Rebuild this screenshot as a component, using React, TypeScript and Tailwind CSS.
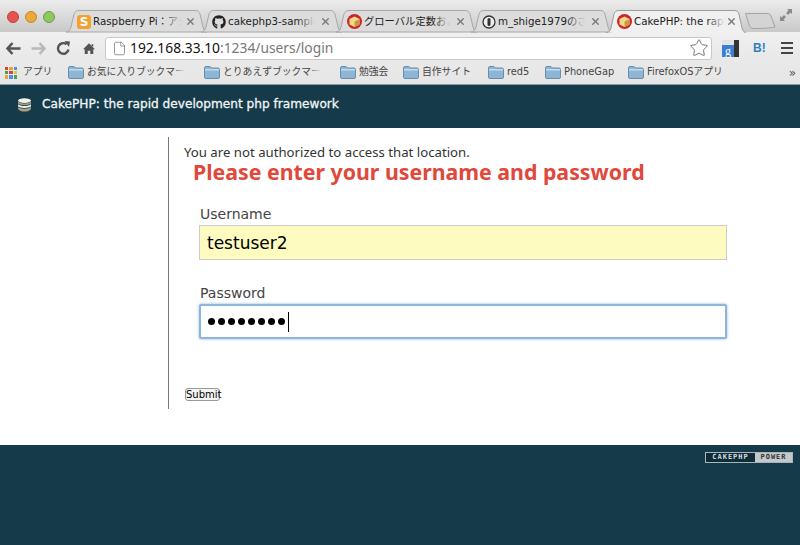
import React from 'react';
import { FaGithub } from 'react-icons/fa';
import { File, Star, X } from 'lucide-react';

const sans = { fontFamily: '"DejaVu Sans", "Noto Sans CJK JP", sans-serif' };
const noto = { fontFamily: '"Noto Sans", "Noto Sans CJK JP", sans-serif' };

const CakeFavicon = () => (
    <svg width="15" height="15" viewBox="0 0 15 15" className="shrink-0">
        <circle cx="7.5" cy="7.5" r="7.5" fill="#c9272c" />
        <path d="M7.5 2.5 L12.5 5 V10.5 L7.5 13 L2.5 10.5 V5 Z" fill="#f5d98a" />
        <path d="M7.5 7.5 L12.5 5 V10.5 L7.5 13 Z" fill="#c99a3f" />
    </svg>
);

const Tab = ({ icon, label, active, fadeAt }: { icon: React.ReactNode; label: string; active?: boolean; fadeAt: number }) => (
    <div className={`relative h-[22px] shrink-0 ${active ? 'w-[140px] z-10' : 'w-[135px]'}`}>
        <svg className="absolute left-0 top-0" width={active ? 140 : 141} height="23" viewBox={`0 0 ${active ? 140 : 141} 23`}>
            {active ? (
                <path d="M0 22.5 C3 22.5 4 21 5 18 L8 4 C9 1.5 10 0.5 13 0.5 H128 C131 0.5 132 1.5 133 4 L136 18 C137 21 138 22.5 140 22.5" fill="#f0f0f0" stroke="#9c9c9c" />
            ) : (
                <path d="M0 22 C3 22 4 20 5 17 L8 4 C9 1.5 10 0.5 13 0.5 H129 C132 0.5 133 1.5 134 4 L137 17 C138 20 139 22 141 22 Z" fill="#dcdcdc" stroke="#a8a8a8" />
            )}
        </svg>
        <div className="relative flex h-full items-center pl-[11px] pt-[1px]">
            {icon}
            <div className="relative ml-[2px] overflow-hidden whitespace-nowrap text-[10.3px] text-[#222]" style={{ ...sans, width: fadeAt }}>
                {label}
                <div className={`absolute right-0 top-0 h-full w-[18px] bg-gradient-to-r from-transparent ${active ? 'to-[#f0f0f0]' : 'to-[#dcdcdc]'}`} />
            </div>
            <X size={11} strokeWidth={3} className={`absolute top-[6px] text-[#777] ${active ? 'right-[9px]' : 'right-[5px]'}`} />
        </div>
    </div>
);

const Folder = () => (
    <svg width="16" height="13" viewBox="0 0 16 13" className="shrink-0">
        <path d="M0.5 2 Q0.5 0.5 2 0.5 H6 L7.5 2 H14 Q15.5 2 15.5 3.5 V11 Q15.5 12.5 14 12.5 H2 Q0.5 12.5 0.5 11 Z" fill="#8db6d6" stroke="#6d8ba5" />
        <rect x="1" y="3" width="14" height="1.5" fill="#c4dcee" />
    </svg>
);

const Bookmark = ({ label, width, fade }: { label: string; width: number; fade?: boolean }) => (
    <div className="flex shrink-0 items-center" style={{ width }}>
        <Folder />
        <div className="relative ml-[3px] overflow-hidden whitespace-nowrap text-[9.8px] text-[#444]">
            {label}
            {fade && <div className="absolute right-0 top-0 h-full w-[12px] bg-gradient-to-r from-transparent to-[#e8e8e8]" />}
        </div>
    </div>
);

const AppsGrid = () => {
    const colors = ['#d9433b', '#e8a33a', '#4d8fe0', '#46a35a', '#d9433b', '#e8c33a', '#e8a33a', '#4d8fe0', '#46a35a'];
    return (
        <div className="grid h-[12px] w-[12px] shrink-0 grid-cols-3 gap-[1px]">
            {colors.map((c, i) => (
                <div key={i} style={{ backgroundColor: c }} />
            ))}
        </div>
    );
};

const CakeLogo = () => (
    <svg width="15" height="14" viewBox="0 0 15 14" className="shrink-0">
        <ellipse cx="7.5" cy="2.6" rx="6.5" ry="2.4" fill="#f2f2e6" />
        <path d="M1 3.5 C3 6 12 6 14 3.5 V5.5 C12 7.8 3 7.8 1 5.5 Z" fill="#a99f82" />
        <path d="M1 6.2 C3 8.6 12 8.6 14 6.2 V8.2 C12 10.5 3 10.5 1 8.2 Z" fill="#f2f2e6" />
        <path d="M1 8.9 C3 11.2 12 11.2 14 8.9 V11 C12 14.4 3 14.4 1 11 Z" fill="#a99f82" />
    </svg>
);

export default function App() {
    return (
        <div className="flex h-[545px] w-[800px] flex-col overflow-hidden bg-white" style={sans}>
            {/* tab strip */}
            <div className="relative flex h-[32px] shrink-0 items-end bg-gradient-to-b from-[#ececec] to-[#c9c9c9] pl-[66px]">
                <div className="absolute left-[7px] top-[11px] flex gap-[6px]">
                    <div className="h-[12px] w-[12px] rounded-full border border-[#b8453f] bg-[#e5534c]" />
                    <div className="h-[12px] w-[12px] rounded-full border border-[#c48a2c] bg-[#eba93c]" />
                    <div className="h-[12px] w-[12px] rounded-full border border-[#6d9d43] bg-[#8fc860]" />
                </div>
                <Tab
                    fadeAt={89}
                    label="Raspberry Pi：アシ"
                    icon={<div className="flex h-[14px] w-[14px] shrink-0 items-center justify-center rounded-[3px] bg-[#f3a02f] text-[12px] font-bold leading-none text-white">S</div>}
                />
                <Tab fadeAt={87} label="cakephp3-sample" icon={<FaGithub size={14} className="shrink-0 text-[#222]" />} />
                <Tab fadeAt={87} label="グローバル定数およ" icon={<CakeFavicon />} />
                <Tab
                    fadeAt={87}
                    label="m_shige1979のさ"
                    icon={
                        <svg width="14" height="14" viewBox="0 0 14 14" className="shrink-0">
                            <circle cx="7" cy="7" r="6" fill="#eee" stroke="#333" strokeWidth="1.3" />
                            <rect x="5.5" y="3" width="3" height="8" rx="1.5" fill="#333" />
                        </svg>
                    }
                />
                <Tab active fadeAt={91} label="CakePHP: the rapid" icon={<CakeFavicon />} />
                <svg width="32" height="17" viewBox="0 0 32 17" className="ml-[-1px] mb-[3px] shrink-0">
                    <path d="M0.5 1.5 H23 Q25 1.5 26 4 L30 15 Q24 16.5 8 16.5 Q5.5 16.5 4.5 14 Z" fill="#d4d4d4" stroke="#a4a4a4" />
                </svg>
                <svg width="14" height="14" viewBox="0 0 14 14" className="absolute right-[7px] top-[8px]">
                    <path d="M8 1 H13 V6 L11.5 4.5 L9 7 L7 5 L9.5 2.5 Z M6 13 H1 V8 L2.5 9.5 L5 7 L7 9 L4.5 11.5 Z" fill="#8a8a8a" />
                </svg>
            </div>

            {/* toolbar */}
            <div className="flex h-[28px] shrink-0 items-center bg-gradient-to-b from-[#f0f0f0] to-[#e8e8e8] pl-[6px] pt-[4px]">
                <svg width="15" height="13" viewBox="0 0 15 13" className="shrink-0">
                    <path d="M6.5 1 L1.5 6.5 L6.5 12 M2 6.5 H14.5" fill="none" stroke="#555" strokeWidth="2.6" />
                </svg>
                <svg width="15" height="13" viewBox="0 0 15 13" className="ml-[10px] shrink-0">
                    <path d="M8.5 1 L13.5 6.5 L8.5 12 M13 6.5 H0.5" fill="none" stroke="#b9b9b9" strokeWidth="2.6" />
                </svg>
                <svg width="15" height="15" viewBox="0 0 15 15" className="ml-[10px] shrink-0">
                    <path d="M12.5 8.5 A5.3 5.3 0 1 1 10.6 3.3" fill="none" stroke="#555" strokeWidth="2.4" />
                    <path d="M8.5 0 L14 0.5 L13 6 Z" fill="#555" />
                </svg>
                <svg width="12" height="13" viewBox="0 0 14 14" className="ml-[12px] shrink-0">
                    <path d="M7 1 L14 8 H12 V13.5 H8.5 V9.5 H5.5 V13.5 H2 V8 H0 Z M10 2 H12 V5 L10 3.5 Z" fill="#555" />
                </svg>
                <div className="ml-[10px] flex h-[23px] w-[607px] shrink-0 items-center rounded-[3px] border border-[#c8c8c8] bg-white pl-[6px]">
                    <File size={15} strokeWidth={1.2} className="shrink-0 text-[#777]" />
                    <div className="ml-[3px] text-[13.8px] text-[#111]" style={noto}>
                        192.168.33.10<span className="text-[#777]">:1234/users/login</span>
                    </div>
                    <Star size={20} strokeWidth={1.2} className="ml-auto mr-[2px] text-[#777]" />
                </div>
                <div className="ml-[10px] flex h-[17px] w-[17px] shrink-0 items-end bg-[#e4e4e4]">
                    <div className="flex h-[12px] w-[12px] items-center justify-center bg-[#3e7fd6] text-[12px] leading-none text-white" style={{ fontFamily: '"Liberation Serif", serif' }}>
                        g
                    </div>
                    <div className="h-[17px] w-[5px] bg-[#333]" />
                </div>
                <div className="ml-[14px] text-[12px] font-bold text-[#2e7fc4]" style={{ fontFamily: '"Liberation Sans", sans-serif' }}>
                    B!
                </div>
                <div className="ml-[15px] flex flex-col gap-[2.5px]">
                    <div className="h-[2.5px] w-[12px] bg-[#444]" />
                    <div className="h-[2.5px] w-[12px] bg-[#444]" />
                    <div className="h-[2.5px] w-[12px] bg-[#444]" />
                </div>
            </div>

            {/* bookmarks */}
            <div className="relative flex h-[25px] shrink-0 items-center border-b border-[#8f9a9e] bg-gradient-to-b from-[#e9e9e9] to-[#e6e6e6] pl-[5px] pt-[1px]">
                <div className="flex w-[63px] shrink-0 items-center">
                    <AppsGrid />
                    <span className="ml-[6px] text-[9.8px] text-[#444]">アプリ</span>
                </div>
                <Bookmark width={136} fade label="お気に入りブックマー" />
                <Bookmark width={136} fade label="とりあえずブックマー" />
                <Bookmark width={63} label="勉強会" />
                <Bookmark width={85} label="自作サイト" />
                <Bookmark width={57} label="red5" />
                <Bookmark width={83} label="PhoneGap" />
                <Bookmark width={100} label="FirefoxOSアプリ" />
                <span className="absolute right-[4px] top-[4px] text-[12px] text-[#555]">»</span>
            </div>

            {/* cake header */}
            <div className="flex h-[43px] shrink-0 items-center bg-[#153a4a] pb-[4px] pl-[17px]">
                <CakeLogo />
                <h1 className="ml-[10px] text-[12.15px] font-normal text-[#f2f5f6] [-webkit-text-stroke:0.3px_#f2f5f6]">CakePHP: the rapid development php framework</h1>
            </div>

            {/* content */}
            <div className="flex-1 pl-[168px] pt-[9px]">
                <div className="h-[272px] border-l border-[#777] pl-[15px] pt-[7px]">
                    <div className="text-[13.2px] leading-[17px] text-[#333]" style={noto}>You are not authorized to access that location.</div>
                    <h2 className="ml-[9px] text-[21.3px] font-bold leading-[22px] text-[#e0483b]" style={noto}>Please enter your username and password</h2>
                    <form className="ml-[15px] w-[528px]">
                        <label className="mt-[22px] block pl-[1px] text-[14px] leading-[18px] text-[#444]">Username</label>
                        <input readOnly value="testuser2" className="mt-[2px] block h-[35px] w-full border border-[#ccc] bg-[#fdfbc0] px-[7px] text-[17px] text-black outline-none" />
                        <label className="mt-[24px] block pl-[1px] text-[14px] leading-[18px] text-[#444]">Password</label>
                        <div className="mt-[2px] flex h-[35px] w-full items-center rounded-[2px] border-2 border-[#8db5de] bg-white pl-[7px] shadow-[0_0_3px_#8db5de]">
                            <div className="flex gap-[3px]">
                                {[0, 1, 2, 3, 4, 5, 6, 7].map((i) => (
                                    <div key={i} className="h-[7px] w-[7px] rounded-full bg-black" />
                                ))}
                            </div>
                            <div className="ml-[3px] h-[20px] w-[1px] bg-black" />
                        </div>
                    </form>
                    <button className="ml-[1px] mt-[49px] block h-[13px] w-[35px] rounded-[3px] border border-[#999] bg-[#f4f4f4] text-center text-[10px] leading-[11px] text-black">Submit</button>
                </div>
            </div>

            {/* footer */}
            <div className="flex h-[100px] shrink-0 justify-end bg-[#153a4a] pr-[7px] pt-[7px]">
                <div className="flex h-[11px] w-[88px] border border-[#a9b5ba] text-[7px] font-bold leading-[9px] tracking-[1px]" style={{ fontFamily: '"DejaVu Sans Mono", monospace' }}>
                    <div className="flex w-[49px] items-center justify-center bg-[#0f2c39] text-[#d6dde0]">CAKEPHP</div>
                    <div className="flex flex-1 items-center justify-center bg-[#c4c8ca] text-[#333]">POWER</div>
                </div>
            </div>
        </div>
    );
}
